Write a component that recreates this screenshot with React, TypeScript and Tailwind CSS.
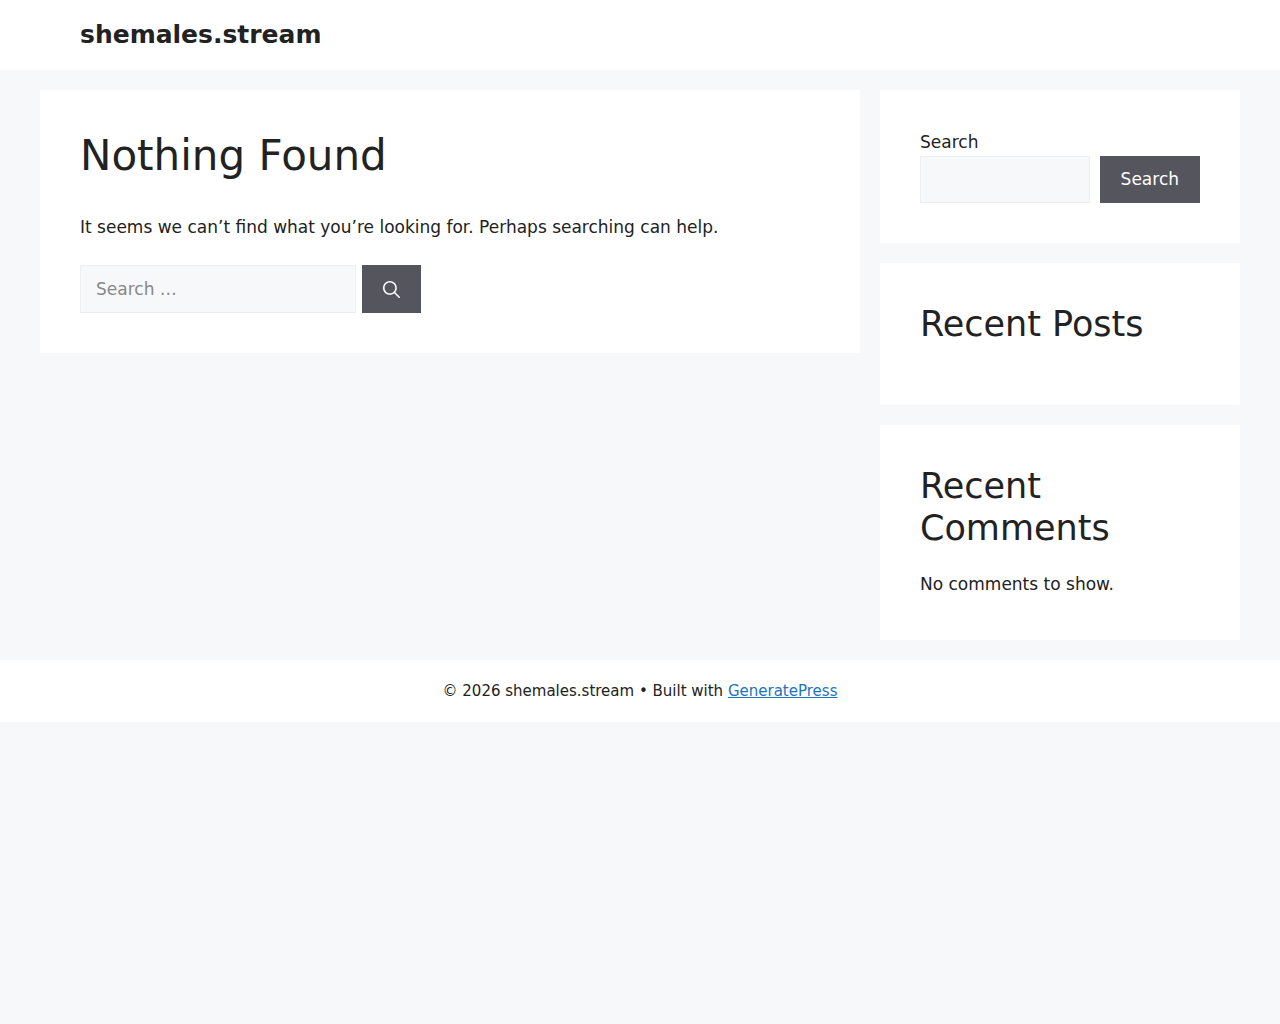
import React, { useState } from 'react';

interface WidgetProps {
  title?: string;
  children?: React.ReactNode;
}

function Widget({ title, children }: WidgetProps) {
  return (
    <section className="bg-white p-10">
      {title && <h2 className="mb-5 text-[35px] leading-[42px]">{title}</h2>}
      {children}
    </section>
  );
}

function SearchIcon() {
  return (
    <svg viewBox="0 0 512 512" className="h-[17px] w-[17px] fill-current" aria-hidden="true">
      <path
        fillRule="evenodd"
        clipRule="evenodd"
        d="M208 48c-88.366 0-160 71.634-160 160s71.634 160 160 160 160-71.634 160-160S296.366 48 208 48zM0 208C0 93.125 93.125 0 208 0s208 93.125 208 208c0 48.741-16.765 93.566-44.843 129.024l133.826 134.018c9.366 9.379 9.355 24.575-.025 33.941-9.379 9.366-24.575 9.355-33.941-.025L337.238 370.987C301.747 399.167 256.839 416 208 416 93.125 416 0 322.875 0 208z"
      />
    </svg>
  );
}

export default function App() {
  const [query, setQuery] = useState('');
  const [widgetQuery, setWidgetQuery] = useState('');

  return (
    <div className="min-h-screen bg-[#f7f8f9] font-['DejaVu_Sans',sans-serif] text-[17px] leading-[26px] text-[#222222]">
      {/* Header */}
      <header className="bg-white">
        <div className="mx-auto max-w-[1200px] px-10 py-[19px]">
          <p className="text-[25px] leading-[32px] font-bold">
            <a href="#">shemales.stream</a>
          </p>
        </div>
      </header>

      <div className="mx-auto flex max-w-[1200px] items-start gap-5 py-5">
        {/* Content */}
        <main className="flex-1 bg-white p-10">
          <h1 className="text-[42px] leading-[52px]">Nothing Found</h1>
          <p className="mt-8 mb-[25px]">
            It seems we can’t find what you’re looking for. Perhaps searching can help.
          </p>
          <form className="flex gap-1.5" onSubmit={(e) => e.preventDefault()}>
            <input
              type="search"
              aria-label="Search for:"
              placeholder="Search …"
              value={query}
              onChange={(e) => setQuery(e.target.value)}
              className="h-12 w-[276px] border border-[#eeeeee] bg-[#f7f8f9] px-[15px] placeholder:text-[#888888]"
            />
            <button
              type="submit"
              aria-label="Search"
              className="flex h-12 items-center bg-[#55555e] px-[21px] text-white"
            >
              <SearchIcon />
            </button>
          </form>
        </main>

        {/* Sidebar */}
        <aside className="w-[30%] space-y-5">
          <Widget>
            <form onSubmit={(e) => e.preventDefault()}>
              <label htmlFor="widget-search" className="mb-0.5 block leading-6">
                Search
              </label>
              <div className="flex gap-2.5">
                <input
                  id="widget-search"
                  type="search"
                  value={widgetQuery}
                  onChange={(e) => setWidgetQuery(e.target.value)}
                  className="min-w-0 flex-1 border border-[#eeeeee] bg-[#f7f8f9] px-2"
                />
                <button type="submit" className="bg-[#55555e] px-[21px] py-2.5 leading-[27px] text-white">
                  Search
                </button>
              </div>
            </form>
          </Widget>
          <Widget title="Recent Posts" />
          <Widget title="Recent Comments">
            <p className="leading-[31px]">No comments to show.</p>
          </Widget>
        </aside>
      </div>

      {/* Footer */}
      <footer className="bg-white py-5 text-center text-[15px] leading-[22px]">
        © 2026 shemales.stream • Built with{' '}
        <a href="#" className="text-[#1e73be] underline">
          GeneratePress
        </a>
      </footer>
    </div>
  );
}
